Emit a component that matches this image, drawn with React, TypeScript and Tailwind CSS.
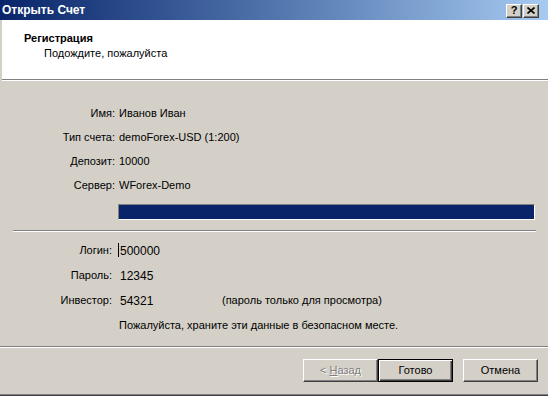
import React from 'react';

const font = { fontFamily: '"Liberation Sans", Arial, sans-serif' };

function InfoRow({ label, value }: { label: string; value: string }) {
  return (
    <div className="flex items-center h-[24px]">
      <div className="w-[115px] text-right text-[11px] text-black">{label}</div>
      <div className="pl-[4px] text-[11px] text-black">{value}</div>
    </div>
  );
}

function AccountRow({ label, value, caret, extra }: { label: string; value: string; caret?: boolean; extra?: string }) {
  return (
    <div className="flex items-center h-[25px]">
      <div className="w-[112px] text-right text-[11px] text-black">{label}</div>
      <div className="w-[102px] pl-[8px] flex items-center text-[12px] text-black relative">
        {caret && <span className="absolute left-[6px] top-[1px] w-px h-[14px] bg-black" />}
        <span>{value}</span>
      </div>
      {extra && <div className="pl-[8px] text-[11px] text-black">{extra}</div>}
    </div>
  );
}

function WinButton({ children, isDefault, disabled }: { children: React.ReactNode; isDefault?: boolean; disabled?: boolean }) {
  const frame = isDefault
    ? 'border border-black shadow-[inset_1px_1px_#ffffff,inset_-1px_-1px_#404040,inset_-2px_-2px_#808080]'
    : 'border border-t-white border-l-white border-r-[#404040] border-b-[#404040] shadow-[inset_-1px_-1px_#808080]';
  return (
    <div
      className={`w-[75px] h-[23px] bg-[#d4d0c8] flex items-center justify-center text-[11px] ${frame} ${
        disabled ? 'text-[#808080] [text-shadow:1px_1px_0_#ffffff]' : 'text-black'
      }`}
    >
      {children}
    </div>
  );
}

function CaptionButton({ children }: { children: React.ReactNode }) {
  return (
    <div className="w-[16px] h-[14px] bg-[#d4d0c8] border border-t-white border-l-white border-r-[#404040] border-b-[#404040] shadow-[inset_-1px_-1px_#808080] flex items-center justify-center">
      {children}
    </div>
  );
}

export default function App() {
  return (
    <div className="w-[548px] h-[396px] bg-[#d4d0c8] flex flex-col overflow-hidden" style={font}>
      {/* title bar */}
      <div className="h-[20px] shrink-0 bg-linear-to-r from-[#0a246a] to-[#a6caf0] flex items-center pl-[2px] pr-[9px]">
        <span className="text-white font-bold text-[12px] flex-1">Открыть Счет</span>
        <div className="flex gap-[1px] mt-[1px]">
          <CaptionButton>
            <span className="text-[11px] font-bold leading-none text-black">?</span>
          </CaptionButton>
          <CaptionButton>
            <svg width="8" height="7" viewBox="0 0 8 7">
              <path d="M0.5 0.5L7.5 6.5M7.5 0.5L0.5 6.5" stroke="#000" strokeWidth="1.6" />
            </svg>
          </CaptionButton>
        </div>
      </div>

      {/* header */}
      <div className="h-[59px] shrink-0 bg-white border-l-2 border-[#d4d0c8] pl-[22px] pt-[12px]">
        <div className="text-[11px] font-bold text-black leading-[13px]">Регистрация</div>
        <div className="text-[11px] text-black leading-[13px] pl-[20px] mt-[2px]">Подождите, пожалуйста</div>
      </div>
      <div className="h-px shrink-0 bg-[#808080] ml-[2px]" />
      <div className="h-px shrink-0 bg-white ml-[2px]" />

      {/* server info */}
      <div className="pt-[20px]">
        <InfoRow label="Имя:" value="Иванов Иван" />
        <InfoRow label="Тип счета:" value="demoForex-USD (1:200)" />
        <InfoRow label="Депозит:" value="10000" />
        <InfoRow label="Сервер:" value="WForex-Demo" />
      </div>

      {/* progress */}
      <div className="mt-[7px] ml-[118px] w-[417px] h-[16px] border border-t-[#808080] border-l-[#808080] border-r-white border-b-white">
        <div className="h-full w-full bg-[#0a246a]" />
      </div>

      <div className="mt-[10px] ml-[13px] w-[523px]">
        <div className="h-px bg-[#808080]" />
        <div className="h-px bg-white" />
      </div>

      {/* account data */}
      <div className="mt-[6px]">
        <AccountRow label="Логин:" value="500000" caret />
        <AccountRow label="Пароль:" value="12345" />
        <AccountRow label="Инвестор:" value="54321" extra="(пароль только для просмотра)" />
        <div className="flex items-center h-[25px] pl-[119px] text-[11px] text-black">
          Пожалуйста, храните эти данные в безопасном месте.
        </div>
      </div>

      <div className="mt-[8px]">
        <div className="h-px bg-[#808080]" />
        <div className="h-px bg-white" />
      </div>

      {/* buttons */}
      <div className="mt-[11px] flex pl-[303px]">
        <WinButton disabled>
          <span>
            &lt; <span className="underline">Н</span>азад
          </span>
        </WinButton>
        <WinButton isDefault>Готово</WinButton>
        <div className="ml-[10px]">
          <WinButton>Отмена</WinButton>
        </div>
      </div>

      <div className="flex-1" />
      <div className="h-px shrink-0 bg-[#808080]" />
      <div className="h-px shrink-0 bg-[#404040]" />
    </div>
  );
}
